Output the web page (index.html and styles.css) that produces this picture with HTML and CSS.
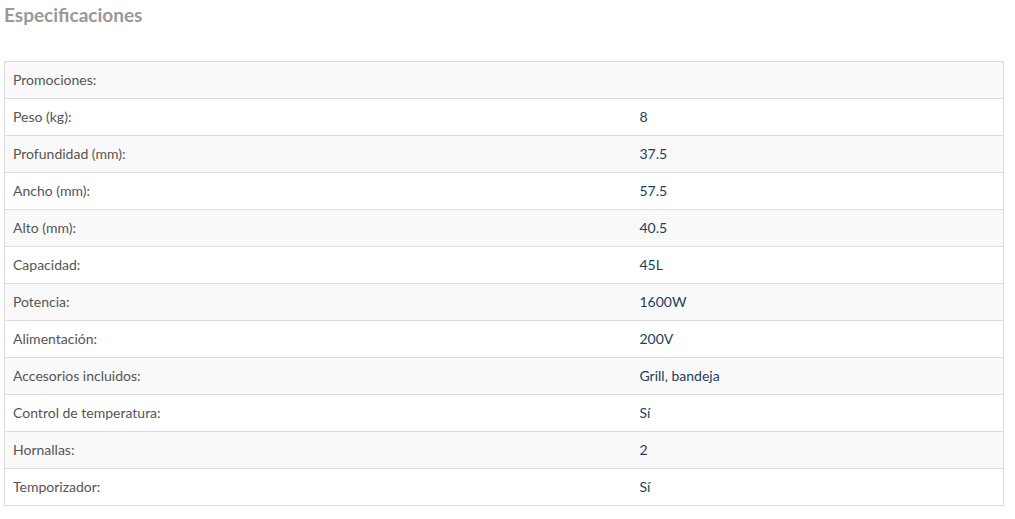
FILE: index.html
```html
<!DOCTYPE html>
<html lang="es">
<head>
<meta charset="utf-8">
<link rel="stylesheet" href="styles.css">
</head>
<body>
<section class="specs">
  <h2 class="specs-title">Especificaciones</h2>
  <table class="specs-table">
    <colgroup><col class="col-label"><col></colgroup>
    <tbody>
      <tr><td>Promociones:</td><td class="val"></td></tr>
      <tr><td>Peso (kg):</td><td class="val">8</td></tr>
      <tr><td>Profundidad (mm):</td><td class="val">37.5</td></tr>
      <tr><td>Ancho (mm):</td><td class="val">57.5</td></tr>
      <tr><td>Alto (mm):</td><td class="val">40.5</td></tr>
      <tr><td>Capacidad:</td><td class="val">45L</td></tr>
      <tr><td>Potencia:</td><td class="val">1600W</td></tr>
      <tr><td>Alimentación:</td><td class="val">200V</td></tr>
      <tr><td>Accesorios incluidos:</td><td class="val">Grill, bandeja</td></tr>
      <tr><td>Control de temperatura:</td><td class="val">Sí</td></tr>
      <tr><td>Hornallas:</td><td class="val">2</td></tr>
      <tr><td>Temporizador:</td><td class="val">Sí</td></tr>
    </tbody>
  </table>
</section>
</body>
</html>
```
FILE: styles.css
```css
html, body {
  margin: 0;
  padding: 0;
  background: #fff;
}
body {
  font-family: Lato, "Open Sans", sans-serif;
  padding: 2px 4px 4px;
}
.specs-title {
  margin: 0;
  font-size: 19px;
  line-height: 26px;
  font-weight: 700;
  color: #999;
}
.specs-table {
  margin-top: 33px;
  width: 1000px;
  border-collapse: collapse;
  border: 1px solid #ddd;
  font-size: 14px;
  color: #555;
}
.col-label {
  width: 627px;
}
.specs-table td {
  border-top: 1px solid #ddd;
  padding: 8px 8px;
  line-height: 20px;
  height: 20px;
  vertical-align: middle;
}
.specs-table tr:nth-child(odd) td {
  background: #f9f9f9;
}
.specs-table td.val {
  color: #1b3f60;
}
```
